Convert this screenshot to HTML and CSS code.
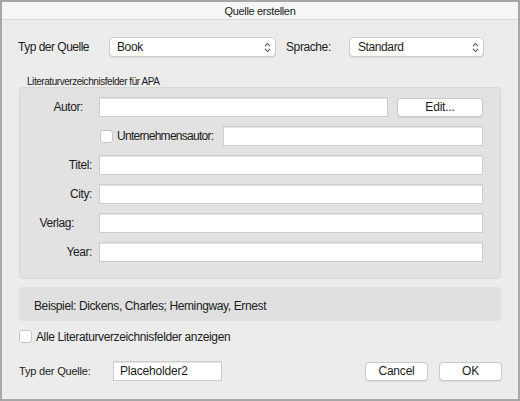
FILE: index.html
```html
<!DOCTYPE html>
<html lang="de">
<head>
<meta charset="utf-8">
<title>Quelle erstellen</title>
<link rel="stylesheet" href="styles.css">
</head>
<body>
<div class="window">
  <div class="titlebar">Quelle erstellen</div>
  <div class="content">
    <div class="toprow">
      <span class="top-label">Typ der Quelle</span>
      <div class="select select-type"><span>Book</span>
        <svg class="chev" width="7" height="11" viewBox="0 0 7 11"><path d="M1 4.2 L3.5 1.5 L6 4.2 M1 6.8 L3.5 9.5 L6 6.8" fill="none" stroke="#555" stroke-width="1.1"/></svg>
      </div>
      <span class="lang-label">Sprache:</span>
      <div class="select select-lang"><span>Standard</span>
        <svg class="chev" width="7" height="11" viewBox="0 0 7 11"><path d="M1 4.2 L3.5 1.5 L6 4.2 M1 6.8 L3.5 9.5 L6 6.8" fill="none" stroke="#555" stroke-width="1.1"/></svg>
      </div>
    </div>

    <div class="group-label">Literaturverzeichnisfelder für APA</div>
    <div class="panel">
      <div class="field-grid">
        <label class="flabel flabel-autor">Autor:</label>
        <div class="row-split">
          <div class="input input-autor"></div>
          <div class="button button-edit">Edit...</div>
        </div>

        <div></div>
        <div class="row-corp">
          <span class="checkbox"></span>
          <span class="corp-label">Unternehmensautor:</span>
          <div class="input input-corp"></div>
        </div>

        <label class="flabel">Titel:</label>
        <div class="input"></div>

        <label class="flabel">City:</label>
        <div class="input"></div>

        <label class="flabel flabel-verlag">Verlag:</label>
        <div class="input"></div>

        <label class="flabel">Year:</label>
        <div class="input"></div>
      </div>
    </div>

    <div class="example">Beispiel: Dickens, Charles; Hemingway, Ernest</div>

    <div class="showall">
      <span class="checkbox"></span>
      <span class="showall-label">Alle Literaturverzeichnisfelder anzeigen</span>
    </div>

    <div class="bottomrow">
      <span class="bottom-label">Typ der Quelle:</span>
      <div class="input input-tag">Placeholder2</div>
      <div class="spacer"></div>
      <div class="button button-cancel">Cancel</div>
      <div class="button button-ok">OK</div>
    </div>
  </div>
</div>
</body>
</html>
```

FILE: styles.css
```css
* { box-sizing: border-box; }
html, body { margin: 0; padding: 0; }
body {
  width: 520px;
  height: 401px;
  font-family: "Liberation Sans", Arial, sans-serif;
  font-size: 12px;
  letter-spacing: -0.4px;
  color: #1c1c1c;
  background: #a7a7a7;
}
.window {
  width: 520px;
  height: 401px;
  border: 2px solid #a7a7a7;
  background: #ececec;
  display: flex;
  flex-direction: column;
}
.titlebar {
  height: 18px;
  line-height: 18px;
  text-align: center;
  background: #f6f6f6;
  border-bottom: 1px solid #d9d9d9;
  font-size: 11px;
  color: #222;
  letter-spacing: -0.35px;
}
.content {
  padding: 0 16px 0 17px;
  display: flex;
  flex-direction: column;
}
.toprow {
  margin-top: 17px;
  height: 20px;
  display: flex;
  align-items: center;
}
.top-label {
  width: 91px;
  margin-left: -1px;
  letter-spacing: -0.5px;
}
.select {
  height: 20px;
  background: #fff;
  border: 1px solid #cfcfcf;
  border-radius: 4px;
  box-shadow: 0 1px 1px rgba(0,0,0,0.08);
  display: flex;
  align-items: center;
  justify-content: space-between;
  padding: 0 4px 0 7px;
}
.select-type { width: 167px; }
.select-lang { width: 135px; padding-left: 8px; }
.chev { display: block; }
.lang-label {
  margin-left: 10px;
  width: 63px;
}
.group-label {
  margin-top: 19px;
  height: 11px;
  line-height: 11px;
  font-size: 10px;
  padding-left: 8px;
  letter-spacing: -0.45px;
}
.panel {
  background: #e2e2e2;
  border: 1px solid #d8d8d8;
  border-radius: 4px;
  padding: 9px 17px 16px 0;
  width: 482px;
}
.field-grid {
  display: grid;
  grid-template-columns: 79px 1fr;
  grid-auto-rows: 20px;
  row-gap: 9px;
}
.flabel {
  text-align: right;
  padding-right: 7px;
  line-height: 20px;
}
.flabel-autor { padding-right: 16px; }
.flabel-verlag { padding-right: 25px; }
.input {
  height: 20px;
  background: #fff;
  border: 1px solid #cdcdcd;
  box-shadow: inset 0 1px 0 #e6e6e6;
}
.row-split {
  display: flex;
  gap: 9px;
}
.input-autor { flex: 1; }
.button {
  height: 19px;
  background: #fff;
  border: 1px solid #cacaca;
  border-radius: 4px;
  box-shadow: 0 1px 1px rgba(0,0,0,0.07);
  text-align: center;
  line-height: 17px;
  letter-spacing: -0.2px;
}
.button-edit { width: 86px; margin-top: 1px; }
.row-corp {
  display: flex;
  align-items: center;
}
.checkbox {
  width: 13px;
  height: 13px;
  background: #fff;
  border: 1px solid #c6c6c6;
  border-radius: 3px;
  flex: none;
}
.row-corp .checkbox { margin-left: 1px; }
.corp-label {
  margin-left: 4px;
  width: 106px;
  white-space: nowrap;
  letter-spacing: -0.72px;
}
.input-corp { flex: 1; }
.example {
  margin-top: 8px;
  height: 34px;
  width: 482px;
  line-height: 38px;
  background: #e0e0e0;
  border-radius: 4px;
  padding-left: 15px;
  letter-spacing: -0.38px;
}
.showall {
  margin-top: 9px;
  height: 13px;
  display: flex;
  align-items: center;
}
.showall-label {
  margin-left: 4px;
  letter-spacing: -0.38px;
}
.bottomrow {
  margin-top: 18px;
  height: 20px;
  display: flex;
  align-items: center;
}
.bottom-label {
  width: 94px;
  font-size: 11px;
  letter-spacing: -0.2px;
}
.input-tag {
  width: 109px;
  padding-left: 6px;
  line-height: 18px;
  font-size: 12px;
  letter-spacing: -0.2px;
}
.spacer { flex: 1; }
.button-cancel { width: 63px; margin-right: 1px; }
.button-ok { width: 63px; margin-left: 10px; }
```
